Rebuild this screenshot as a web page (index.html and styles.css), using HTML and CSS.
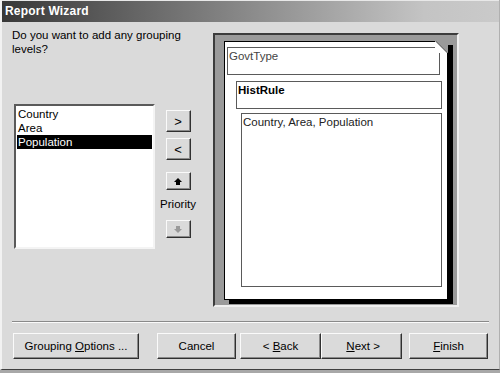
FILE: index.html
```html
<!DOCTYPE html>
<html lang="en">
<head>
  <meta charset="UTF-8" />
  <title>Report Wizard</title>
  <link rel="stylesheet" href="styles.css">
</head>
<body>

  <div class="window">
    <div class="titlebar">Report Wizard</div>

    <div class="main">
      <div class="left">
        <p class="question">Do you want to add any grouping levels?</p>

        <div class="pick-row">
          <ul class="listbox">
            <li>Country</li>
            <li>Area</li>
            <li class="selected">Population</li>
          </ul>

          <div class="move-buttons">
            <button class="btn small">&gt;</button>
            <button class="btn small">&lt;</button>
            <button class="btn arrow up">
              <svg width="8" height="7" viewBox="0 0 8 7"><polygon points="4,0 8,4 6,4 6,7 2,7 2,4 0,4" fill="#000"/></svg>
            </button>
            <span class="priority">Priority</span>
            <button class="btn arrow down">
              <svg width="8" height="7" viewBox="0 0 8 7"><polygon points="2,0 6,0 6,3 8,3 4,7 0,3 2,3" fill="#9a9a9a"/></svg>
            </button>
          </div>
        </div>
      </div>

      <div class="preview">
        <div class="page">
          <div class="fold"></div>
          <div class="box header-box">GovtType</div>
          <div class="box group-box">HistRule</div>
          <div class="box detail-box">Country, Area, Population</div>
        </div>
      </div>
    </div>

    <div class="separator"></div>

    <div class="footer">
      <button class="btn wide options">Grouping <u>O</u>ptions ...</button>
      <button class="btn wide cancel">Cancel</button>
      <div class="nav">
        <button class="btn wide">&lt; <u>B</u>ack</button>
        <button class="btn wide">&nbsp;<u>N</u>ext &gt;</button>
      </div>
      <button class="btn wide finish"><u>F</u>inish</button>
    </div>
  </div>

</body>
</html>
```

FILE: styles.css
```css
* {
  box-sizing: border-box;
}

body {
  margin: 0;
  background-color: #a8a8a8;
  font-family: 'Liberation Sans', Arial, sans-serif;
  font-size: 11px;
  color: #000;
}

.window {
  width: 500px;
  height: 370px;
  background-color: #dadada;
  border-left: 2px solid #f2f2f2;
  border-right: 1px solid #b0b0b0;
  border-bottom: 1px solid #404040;
}

.titlebar {
  height: 22px;
  padding: 3px 0 0 3px;
  border-top: 1px solid #e8e8e8;
  background: linear-gradient(to right, #383838, #6a6a6a 30%, #c4c4c4 85%, #cacaca);
  color: #fff;
  font-weight: 700;
  font-size: 12px;
  letter-spacing: 0.2px;
}

.main {
  display: flex;
  height: 293px;
  padding-left: 10px;
}

.left {
  width: 201px;
}

.question {
  margin: 6px 0 0 0;
  width: 180px;
  line-height: 14px;
  font-size: 11.5px;
}

.pick-row {
  display: flex;
  margin-top: 48px;
  padding-left: 2px;
}

.listbox {
  width: 141px;
  height: 145px;
  margin: 0;
  padding: 1px 1px;
  list-style: none;
  background-color: #fff;
  border: 2px solid;
  border-color: #5a5a5a #f4f4f4 #f4f4f4 #5a5a5a;
  font-size: 11.5px;
}

.listbox li {
  height: 14px;
  line-height: 14px;
  padding-left: 1px;
}

.listbox li.selected {
  background-color: #000;
  color: #fff;
}

.move-buttons {
  display: flex;
  flex-direction: column;
  align-items: center;
  width: 40px;
  padding: 6px 0 0 6px;
}

.btn {
  padding: 0;
  background-color: #dadada;
  border: 1px solid;
  border-color: #fafafa #303030 #303030 #fafafa;
  box-shadow: inset -1px -1px 0 #8a8a8a;
  font-family: 'Liberation Sans', Arial, sans-serif;
  font-size: 11.5px;
  color: #000;
}

.btn.small {
  width: 25px;
  height: 22px;
  margin-bottom: 6px;
  font-size: 13px;
}

.btn.arrow {
  width: 25px;
  height: 18px;
  display: flex;
  align-items: center;
  justify-content: center;
}

.btn.up {
  margin-top: 6px;
}

.priority {
  margin: 8px 0 10px 0;
  font-size: 11.5px;
}

.preview {
  width: 246px;
  height: 274px;
  margin-top: 11px;
  padding: 6px 0 0 9px;
  background-color: #9a9a9a;
  border: 2px solid;
  border-color: #3c3c3c #f0f0f0 #f0f0f0 #3c3c3c;
}

.page {
  position: relative;
  width: 224px;
  height: 259px;
  padding: 5px 0 0 2px;
  background-color: #fff;
  border: 1px solid #000;
  box-shadow: 5px 4px 0 #000;
}

.fold {
  position: absolute;
  top: -1px;
  right: -1px;
  width: 13px;
  height: 12px;
  background: linear-gradient(45deg, #fff 0, #fff 46%, #505050 50%, #9a9a9a 54%, #9a9a9a 100%);
}

.box {
  border: 1px solid #5a5a5a;
  padding: 2px 1px;
  line-height: 13px;
  font-size: 11.5px;
  color: #222;
}

.header-box {
  width: 213px;
  height: 28px;
  color: #444;
}

.group-box {
  width: 206px;
  height: 28px;
  margin: 6px 0 0 9px;
  font-weight: 700;
  color: #000;
}

.detail-box {
  width: 201px;
  height: 174px;
  margin: 4px 0 0 14px;
}

.separator {
  margin: 6px 10px 0 10px;
  border-top: 1px solid #8a8a8a;
  border-bottom: 1px solid #fafafa;
}

.footer {
  display: flex;
  margin-top: 10px;
  padding-left: 11px;
}

.btn.wide {
  width: 79px;
  height: 26px;
}

.btn.options {
  width: 126px;
  margin-right: 18px;
}

.nav {
  display: flex;
  margin-left: 4px;
}

.nav .btn.wide {
  width: 81px;
}

.btn.finish {
  margin-left: 7px;
}
```
